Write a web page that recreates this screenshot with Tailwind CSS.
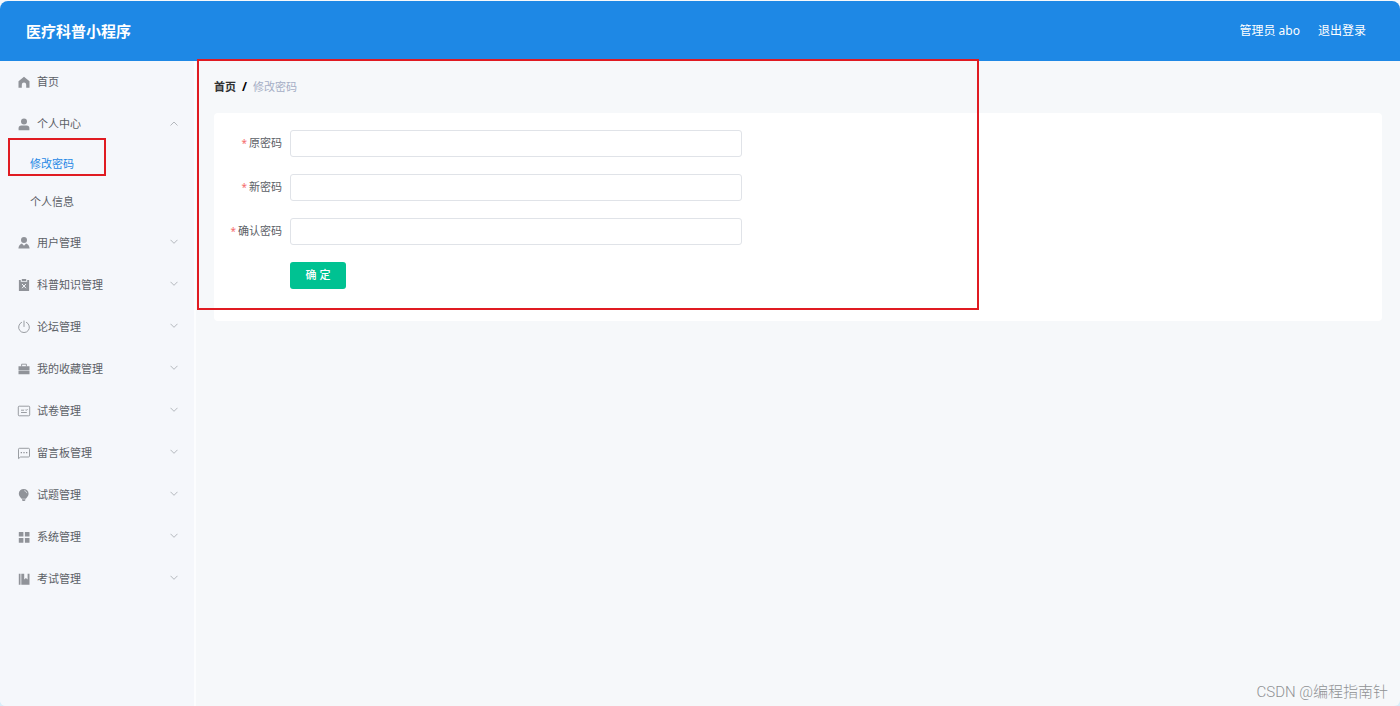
<!DOCTYPE html>
<html lang="zh-CN">
<head>
    <meta charset="UTF-8">
    <meta name="viewport" content="width=device-width, initial-scale=1.0">
    <title>医疗科普小程序</title>
    <script src="https://cdn.jsdelivr.net/npm/@tailwindcss/browser@4"></script>
</head>
<body class="bg-[#d9eefa] font-['Noto_Sans','Noto_Sans_CJK_SC',sans-serif] text-[11px] text-[#5b6066]">
    <svg class="hidden">
        <symbol id="down" viewBox="0 0 8 8"><path d="M.5 .8 4 4.300 7.500 .8" fill="none" stroke="#a3a7ad" stroke-width=".8"/></symbol>
        <symbol id="up" viewBox="0 0 8 8"><path d="M.5 5.500 4 2l3.500 3.500" fill="none" stroke="#a3a7ad" stroke-width=".8"/></symbol>
    </svg>

    <div class="relative flex min-h-screen flex-col overflow-hidden rounded-b-md bg-[#f6f8fa] pt-px">
        <header class="flex h-[60px] items-center justify-between rounded-t-lg bg-[#1e88e5] pr-[34px] pl-[26px] text-white">
            <h1 class="text-[15px] font-bold">医疗科普小程序</h1>
            <div class="flex gap-[18px] text-xs">
                <span>管理员 abo</span>
                <a href="#">退出登录</a>
            </div>
        </header>

        <div class="flex flex-1">
            <!-- sidebar -->
            <nav class="relative w-[196px] shrink-0 border-r-2 border-[#fcfdfe] bg-[#f5f7fb]">
                <ul>
                    <li>
                        <a href="#" class="flex h-[42px] items-center gap-1.5 pl-[17px]">
                            <svg class="size-3.5 fill-[#909399]" viewBox="0 0 14 14"><path d="M7 1.800 12.500 6.200v6.600H9.200V9.800a2.200 2.200 0 0 0-4.400 0v3H1.500V6.200z"/></svg>
                            首页
                        </a>
                    </li>
                    <li>
                        <button type="button" class="flex h-[42px] w-full items-center gap-1.5 pr-4 pl-[17px]">
                            <svg class="size-3.5 fill-[#909399]" viewBox="0 0 14 14"><circle cx="7" cy="4.400" r="3"/><path d="M1.600 13.200v-1.800A2.800 2.800 0 0 1 4.400 8.600h5.200a2.800 2.800 0 0 1 2.800 2.800v1.800z"/></svg>
                            个人中心
                            <svg class="ml-auto size-2"><use href="#up"/></svg>
                        </button>
                        <ul class="pb-px">
                            <li><a href="#" class="flex h-[38px] items-center pl-[30px] text-[#1e88e5]">修改密码</a></li>
                            <li><a href="#" class="flex h-[38px] items-center pl-[30px]">个人信息</a></li>
                        </ul>
                    </li>
                    <li>
                        <button type="button" class="flex h-[42px] w-full items-center gap-1.5 pr-4 pl-[17px]">
                            <svg class="size-3.5 fill-[#909399]" viewBox="0 0 14 14"><circle cx="7" cy="4.100" r="3"/><path d="M1.400 12.600c.2-2.600 1.500-4.200 3.500-5L7 9.700l2.100-2.100c2 .8 3.300 2.400 3.500 5z"/></svg>
                            用户管理
                            <svg class="ml-auto size-2"><use href="#down"/></svg>
                        </button>
                    </li>
                    <li>
                        <button type="button" class="flex h-[42px] w-full items-center gap-1.5 pr-4 pl-[17px]">
                            <svg class="size-3.5" viewBox="0 0 14 14"><path fill="#909399" d="M1.900 2h1.900v1.800h6.400V2h1.900v10.900H1.900zM4.800 1h4.400v2H4.800z"/><path d="m5 6 4 4.200M9 6l-4 4.200" stroke="#f5f7fb"/></svg>
                            科普知识管理
                            <svg class="ml-auto size-2"><use href="#down"/></svg>
                        </button>
                    </li>
                    <li>
                        <button type="button" class="flex h-[42px] w-full items-center gap-1.5 pr-4 pl-[17px]">
                            <svg class="size-3.5 fill-none stroke-[#909399]" viewBox="0 0 14 14"><path d="M4.600 2.300a5.400 5.400 0 1 0 4.800 0M7 1v5.500" stroke-width=".9" stroke-linecap="round"/></svg>
                            论坛管理
                            <svg class="ml-auto size-2"><use href="#down"/></svg>
                        </button>
                    </li>
                    <li>
                        <button type="button" class="flex h-[42px] w-full items-center gap-1.5 pr-4 pl-[17px]">
                            <svg class="size-3.5" viewBox="0 0 14 14"><path fill="#909399" d="M1.500 4.300h11v3.600h-11zM1.500 8.600h11v3.600h-11z"/><path d="M4.600 4.500V2.200h4.800v2.300" fill="none" stroke="#909399" stroke-width=".9"/></svg>
                            我的收藏管理
                            <svg class="ml-auto size-2"><use href="#down"/></svg>
                        </button>
                    </li>
                    <li>
                        <button type="button" class="flex h-[42px] w-full items-center gap-1.5 pr-4 pl-[17px]">
                            <svg class="size-3.5 fill-none stroke-[#909399]" viewBox="0 0 14 14"><rect x="1.300" y="2.200" width="11.400" height="9.600" rx=".9" stroke-width=".9"/><path d="M4 6.200h3M4 8.500h5.800M8.300 5.600l.9.900 1.400-1.500" stroke-width=".9"/></svg>
                            试卷管理
                            <svg class="ml-auto size-2"><use href="#down"/></svg>
                        </button>
                    </li>
                    <li>
                        <button type="button" class="flex h-[42px] w-full items-center gap-1.5 pr-4 pl-[17px]">
                            <svg class="size-3.5" viewBox="0 0 14 14"><path d="M1.500 12.600V3.300a1 1 0 0 1 1-1h9a1 1 0 0 1 1 1v6.700a1 1 0 0 1-1 1H3.500z" fill="none" stroke="#909399" stroke-width=".9"/><path d="M3.700 6h1.300v1.300H3.700zM6.350 6h1.300v1.300h-1.300zM9 6h1.300v1.300H9z" fill="#909399"/></svg>
                            留言板管理
                            <svg class="ml-auto size-2"><use href="#down"/></svg>
                        </button>
                    </li>
                    <li>
                        <button type="button" class="flex h-[42px] w-full items-center gap-1.5 pr-4 pl-[17px]">
                            <svg class="size-3.5" viewBox="0 0 14 14"><path fill="#909399" d="M6.700.900a4.900 4.900 0 0 1 4.900 4.900c0 2.200-1.700 3.500-2.800 5H4.600c-1.100-1.500-2.800-2.800-2.800-5A4.900 4.900 0 0 1 6.700.900zM5 11.300h3.400v.9l-.9.900H5.900l-.9-.9z"/><path d="M7.300 2.700c1.300.2 2.200 1.100 2.400 2.400" fill="none" stroke="#f5f7fb" stroke-width=".7"/></svg>
                            试题管理
                            <svg class="ml-auto size-2"><use href="#down"/></svg>
                        </button>
                    </li>
                    <li>
                        <button type="button" class="flex h-[42px] w-full items-center gap-1.5 pr-4 pl-[17px]">
                            <svg class="size-3.5 fill-[#909399]" viewBox="0 0 14 14"><rect x="1.800" y="2" width="4.600" height="4.600" rx=".3"/><rect x="7.900" y="2" width="4.600" height="4.600" rx=".3"/><rect x="1.800" y="8.100" width="4.600" height="4.600" rx=".3"/><rect x="7.900" y="8.100" width="4.600" height="4.600" rx=".3"/></svg>
                            系统管理
                            <svg class="ml-auto size-2"><use href="#down"/></svg>
                        </button>
                    </li>
                    <li>
                        <button type="button" class="flex h-[42px] w-full items-center gap-1.5 pr-4 pl-[17px]">
                            <svg class="size-3.5 fill-[#909399]" viewBox="0 0 14 14"><path d="M1.800 1.800h1.700v11H1.800zM4.300 1.800h2.900v5.700l1.700-1.500 1.700 1.500V1.800h1.900v11H4.300z"/></svg>
                            考试管理
                            <svg class="ml-auto size-2"><use href="#down"/></svg>
                        </button>
                    </li>
                </ul>
                <div class="pointer-events-none absolute top-[77px] left-2 h-[38px] w-[98px] border-2 border-[#e01b22]"></div>
            </nav>

            <!-- content -->
            <main class="relative flex-1 px-[18px]">
                <div class="flex h-[52px] items-center gap-1.5">
                    <a href="#" class="font-bold text-[#303133]">首页</a>
                    <span class="text-xs font-bold text-black">/</span>
                    <span class="text-[#a5aec5]">修改密码</span>
                </div>
                <form class="flex flex-col gap-[17px] rounded bg-white pt-[17px] pb-8 pl-2">
                    <div class="flex items-center gap-2">
                        <label for="oldPwd" class="w-[60px] text-right"><span class="mr-0.5 text-[10px] text-[#f56c6c]">*</span>原密码</label>
                        <input id="oldPwd" type="password" class="h-[27px] w-full max-w-[452px] rounded-[3px] border border-[#e0e3e8] bg-white px-3">
                    </div>
                    <div class="flex items-center gap-2">
                        <label for="newPwd" class="w-[60px] text-right"><span class="mr-0.5 text-[10px] text-[#f56c6c]">*</span>新密码</label>
                        <input id="newPwd" type="password" class="h-[27px] w-full max-w-[452px] rounded-[3px] border border-[#e0e3e8] bg-white px-3">
                    </div>
                    <div class="flex items-center gap-2">
                        <label for="confirmPwd" class="w-[60px] text-right"><span class="mr-0.5 text-[10px] text-[#f56c6c]">*</span>确认密码</label>
                        <input id="confirmPwd" type="password" class="h-[27px] w-full max-w-[452px] rounded-[3px] border border-[#e0e3e8] bg-white px-3">
                    </div>
                    <div class="pl-[68px]">
                        <button type="submit" class="block h-[27px] w-14 rounded-[3px] bg-[#00c292] font-medium text-white">确 定</button>
                    </div>
                </form>
                <div class="pointer-events-none absolute -top-0.5 left-px h-[251px] w-[782px] border-2 border-[#e01b22]"></div>
            </main>
        </div>

        <div class="absolute right-3 bottom-1 font-[Roboto,'Noto_Sans_CJK_SC',sans-serif] text-[15px] leading-5 font-light text-[#8f9194]">CSDN @编程指南针</div>
    </div>
</body>
</html>
